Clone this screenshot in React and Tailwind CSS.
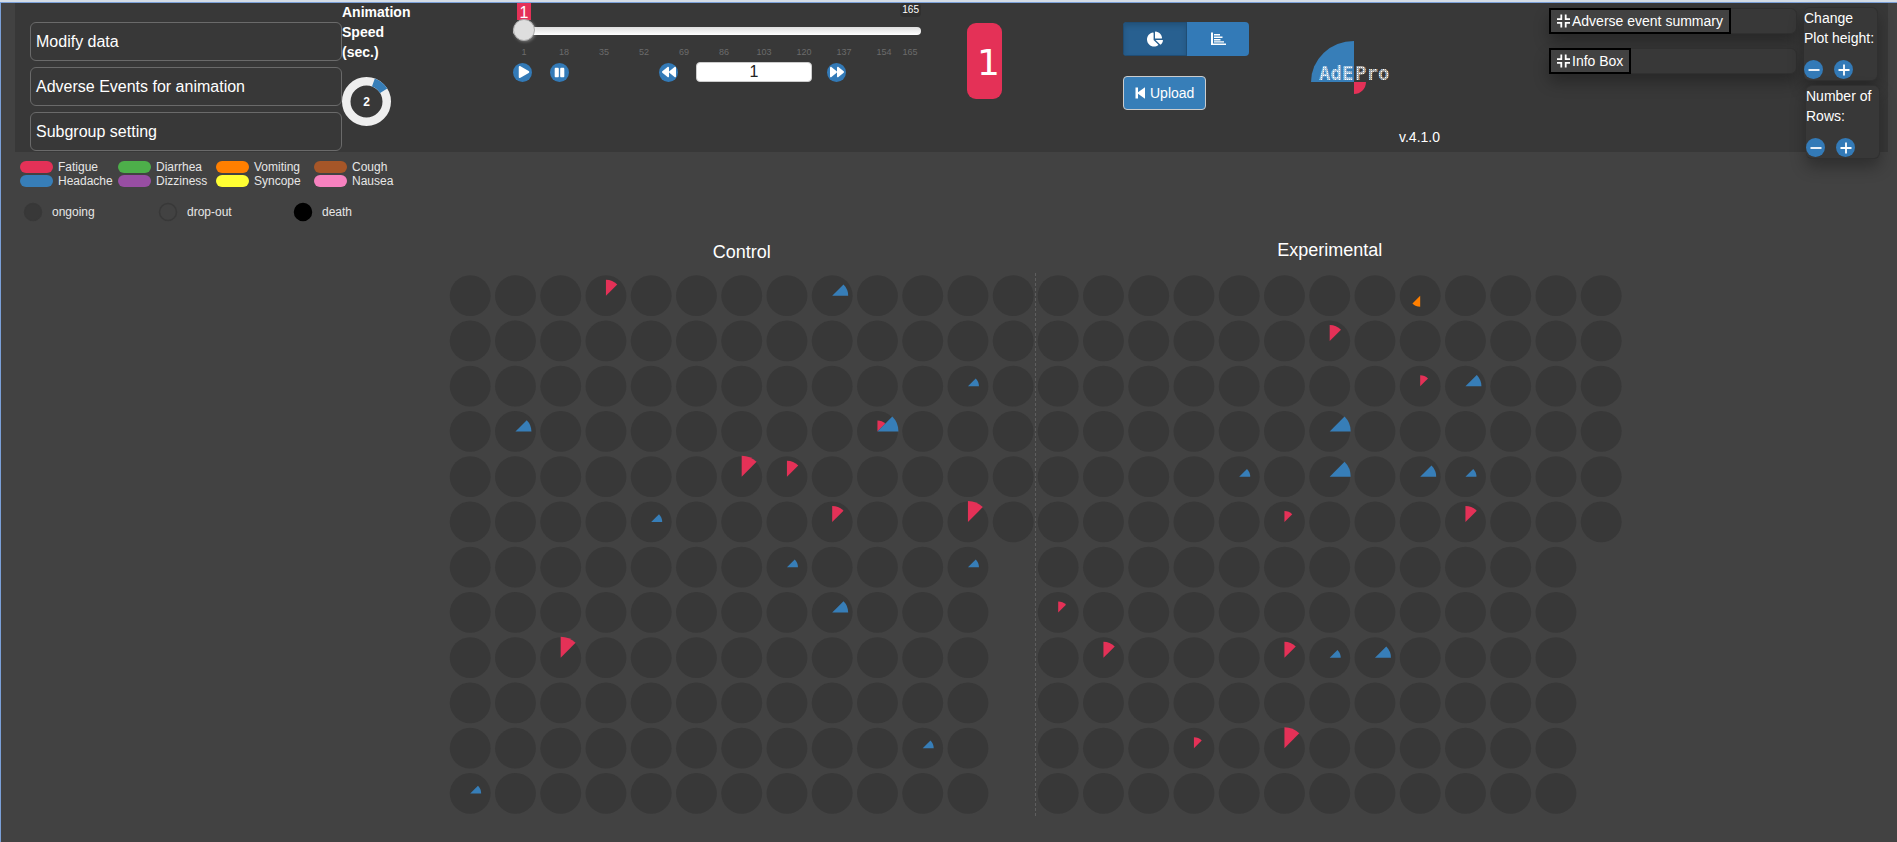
import { useState } from 'react';
import { FaBackward, FaChartPie, FaForward, FaPause, FaPlay, FaStepBackward } from 'react-icons/fa';

const MIN_DAY = 1;
const MAX_DAY = 165;
const TICKS = [1, 18, 35, 52, 69, 86, 103, 120, 137, 154, 165];

const PANELS = ['Modify data', 'Adverse Events for animation', 'Subgroup setting'];

const EVENTS = [
  { name: 'Fatigue', color: '#e43157' },
  { name: 'Headache', color: '#377eb8' },
  { name: 'Diarrhea', color: '#4daf4a' },
  { name: 'Dizziness', color: '#984ea3' },
  { name: 'Vomiting', color: '#ff7f00' },
  { name: 'Syncope', color: '#ffff33' },
  { name: 'Cough', color: '#a65628' },
  { name: 'Nausea', color: '#f781bf' },
];

const STATUSES = [
  { name: 'ongoing', fill: '#383838', stroke: '#383838' },
  { name: 'drop-out', fill: 'none', stroke: '#383838' },
  { name: 'death', fill: '#000000', stroke: '#000000' },
];

// [row, column, event index, severity grade]
const CONTROL = [
  [0, 3, 0, 2], [0, 8, 1, 2], [2, 11, 1, 1], [3, 1, 1, 2], [3, 9, 0, 1], [3, 9, 1, 3],
  [4, 6, 0, 3], [4, 7, 0, 2], [5, 4, 1, 1], [5, 8, 0, 2], [5, 11, 0, 3], [6, 7, 1, 1],
  [6, 11, 1, 1], [7, 8, 1, 2], [8, 2, 0, 3], [10, 10, 1, 1], [11, 0, 1, 1],
];

const EXPERIMENTAL = [
  [0, 8, 4, 1], [1, 6, 0, 2], [2, 8, 0, 1], [2, 9, 1, 2], [3, 6, 1, 3], [4, 4, 1, 1],
  [4, 6, 1, 3], [4, 8, 1, 2], [4, 9, 1, 1], [5, 5, 0, 1], [5, 9, 0, 2], [7, 0, 0, 1],
  [8, 1, 0, 2], [8, 5, 0, 2], [8, 6, 1, 1], [8, 7, 1, 2], [10, 3, 0, 1], [10, 5, 0, 3],
];

const PITCH = 45.25;
const GRADE_RADIUS = [0, 11, 16, 21];

function slicePath(cx, cy, r, index) {
  const a0 = (index * Math.PI) / 4;
  const a1 = a0 + Math.PI / 4;
  const p = (a) => `${cx + r * Math.sin(a)} ${cy - r * Math.cos(a)}`;
  return `M${cx} ${cy}L${p(a0)}A${r} ${r} 0 0 1 ${p(a1)}Z`;
}

function Arm({ title, titleY, x0, y0, slices }) {
  const patients = [];
  for (let row = 0; row < 12; row++) {
    const cols = row < 6 ? 13 : 12;
    for (let col = 0; col < cols; col++) patients.push([row, col]);
  }
  return (
    <g>
      <text
        x={x0 + 6 * PITCH}
        y={titleY}
        textAnchor="middle"
        fontSize="18"
        fill="#ffffff"
      >
        {title}
      </text>
      {patients.map(([row, col]) => (
        <circle
          key={`${row}-${col}`}
          cx={x0 + col * PITCH}
          cy={y0 + row * PITCH}
          r="20.4"
          fill="#383838"
        />
      ))}
      {slices.map(([row, col, event, grade]) => (
        <path
          key={`${row}-${col}-${event}`}
          d={slicePath(x0 + col * PITCH, y0 + row * PITCH, GRADE_RADIUS[grade], event)}
          fill={EVENTS[event].color}
        />
      ))}
    </g>
  );
}

function PiePlot() {
  return (
    <svg viewBox="0 0 1896 609" className="block h-auto w-full" role="img" aria-label="Adverse events">
      <Arm title="Control" titleY="26" x0={469.2} y0={63.7} slices={CONTROL} />
      <Arm title="Experimental" titleY="24" x0={1057.2} y0={63.7} slices={EXPERIMENTAL} />
      <line x1="1034.5" x2="1034.5" y1="41" y2="584" stroke="#5e5e5e" strokeDasharray="3 2" />
    </svg>
  );
}

function RoundButton({ label, onClick, children }) {
  return (
    <button
      type="button"
      aria-label={label}
      onClick={onClick}
      className="flex size-[19px] shrink-0 items-center justify-center rounded-full bg-[#337ab7] text-white"
    >
      {children}
    </button>
  );
}

function SignIcon({ plus }) {
  return (
    <svg viewBox="0 0 12 12" className="size-3" stroke="currentColor" strokeWidth="1.8">
      <path d={plus ? 'M0.5 6H11.5M6 0.5V11.5' : 'M0.5 6H11.5'} />
    </svg>
  );
}

function Stepper({ label, onChange }) {
  return (
    <div
      role="group"
      aria-label={label}
      className="w-[74px] rounded-md border border-l-0 border-[#303030] bg-[#383838] shadow-[0_8px_16px_rgba(0,0,0,0.3)]"
    >
      <p className="text-sm leading-5">{label}</p>
      <div className="mt-3 mb-px flex gap-[11px]">
        <RoundButton label={`${label} less`} onClick={() => onChange(-1)}>
          <SignIcon />
        </RoundButton>
        <RoundButton label={`${label} more`} onClick={() => onChange(1)}>
          <SignIcon plus />
        </RoundButton>
      </div>
    </div>
  );
}

function CompressIcon() {
  return (
    <svg viewBox="0 0 13 14" className="h-3.5 w-[13px]" fill="none" stroke="currentColor" strokeWidth="1.8">
      <path d="M4.3 0.5V5.2H0M8.7 0.5V5.2H13M4.3 13.5V8.8H0M8.7 13.5V8.8H13" />
    </svg>
  );
}

function InfoPanel({ title }) {
  return (
    <div className="flex h-[26px] rounded-md border border-[#303030] bg-[#383838] shadow-[0_8px_16px_rgba(0,0,0,0.3)]">
      <button
        type="button"
        className="-m-px flex items-center gap-0.5 border-2 border-black bg-[#424242] px-1.5 text-sm leading-5"
      >
        <CompressIcon />
        {title}
      </button>
    </div>
  );
}

function Knob({ value }) {
  return (
    <div className="relative flex size-[49px] items-center justify-center">
      <svg viewBox="0 0 49 49" className="absolute inset-0" fill="none" strokeWidth="8.5">
        <circle cx="24.5" cy="24.5" r="20.25" stroke="#eeeeee" />
        <path d="M31.4 5.5A20.25 20.25 0 0 1 41.7 13.8" stroke="#377eb8" />
      </svg>
      <output className="relative text-xs font-bold">{value}</output>
    </div>
  );
}

function Logo() {
  return (
    <svg viewBox="0 0 80 54" className="h-[54px] w-20" role="img" aria-label="AdEPro">
      <defs>
        <pattern id="dots" width="2" height="2" patternUnits="userSpaceOnUse">
          <rect width="2" height="2" fill="#ffffff" fillOpacity="0.55" />
          <rect width="1" height="1" fill="#ffffff" />
        </pattern>
      </defs>
      <path d="M43 0V41H0A43 41 0 0 1 43 0Z" fill="#377eb8" />
      <path d="M43 41H55A12 12 0 0 1 43 53Z" fill="#e43157" />
      <g fontSize="19" fontWeight="bold" fontFamily="DejaVu Sans Mono, monospace" fill="url(#dots)">
        <text x="8" y="39">AdE</text>
        <text x="44" y="39">Pro</text>
      </g>
    </svg>
  );
}

export default function App() {
  const [day, setDay] = useState(MIN_DAY);
  const [view, setView] = useState('pie');
  const move = (d) => setDay((v) => Math.min(MAX_DAY, Math.max(MIN_DAY, v + d)));

  return (
    <div className="min-h-screen border-t-2 border-[#d5dde6] bg-[#424242] font-['Liberation_Sans',Arial,sans-serif] text-white">
      <div className="min-h-[840px] border-t border-l border-[#7ba0d8]">
        <header className="mr-[9px] ml-[14px] grid grid-cols-[327fr_171fr_454fr_156fr_188fr_238fr_255fr_84fr] items-start bg-[#383838]">
          <nav className="flex flex-col gap-1.5 pt-[19px] pb-px pl-[15px]">
            {PANELS.map((p) => (
              <button
                key={p}
                type="button"
                className="h-[39px] rounded-md border border-[#6a6a6a] px-[5px] text-left text-base"
              >
                {p}
              </button>
            ))}
          </nav>

          <div>
            <div className="-mt-px">
              <p className="mb-[15px] w-[72px] text-sm leading-5 font-bold">Animation Speed (sec.)</p>
              <Knob value={2} />
            </div>
          </div>

          <div className="pr-[46px]">
            <div className="flex h-4 items-start justify-between">
              <span className="ml-1 flex h-[17px] w-3.5 justify-center bg-[#e43157] text-base leading-5">{day}</span>
              <span className="rounded-sm bg-[#303030] px-0.5 text-[10px] leading-[14px]">{MAX_DAY}</span>
            </div>
            <input
              type="range"
              aria-label="Day"
              min={MIN_DAY}
              max={MAX_DAY}
              value={day}
              onChange={(e) => setDay(Number(e.target.value))}
              className="relative block h-6 w-full appearance-none bg-transparent [&::-webkit-slider-runnable-track]:h-2 [&::-webkit-slider-runnable-track]:rounded-full [&::-webkit-slider-runnable-track]:bg-linear-to-b [&::-webkit-slider-runnable-track]:from-[#dedede] [&::-webkit-slider-runnable-track]:to-white [&::-webkit-slider-thumb]:-mt-2 [&::-webkit-slider-thumb]:size-[22px] [&::-webkit-slider-thumb]:appearance-none [&::-webkit-slider-thumb]:rounded-full [&::-webkit-slider-thumb]:border [&::-webkit-slider-thumb]:border-[#aaaaaa] [&::-webkit-slider-thumb]:bg-[#dedede] [&::-webkit-slider-thumb]:shadow-[1px_1px_3px_rgba(255,255,255,0.3)]"
            />
            <div className="mx-[11px] mt-[3px] grid grid-cols-[repeat(9,17fr)_11fr_0px] text-[9px] leading-3 text-[#6b6b6b]">
              {TICKS.map((t) => (
                <span key={t} className="flex w-0 justify-center">
                  {t}
                </span>
              ))}
            </div>
            <div className="mt-1 flex items-center">
              <RoundButton label="Play">
                <FaPlay className="ml-0.5 size-3" />
              </RoundButton>
              <span className="w-[18px]" />
              <RoundButton label="Pause">
                <FaPause className="size-[11px]" />
              </RoundButton>
              <div className="ml-auto flex items-center pr-[75px]">
                <RoundButton label="Back" onClick={() => move(-1)}>
                  <FaBackward className="size-3.5" />
                </RoundButton>
                <input
                  type="text"
                  aria-label="Current day"
                  value={day}
                  onChange={(e) => setDay(Number(e.target.value) || MIN_DAY)}
                  className="mr-[15px] ml-[18px] h-5 w-[116px] rounded-sm border border-[#cccccc] bg-white text-center text-base leading-4 text-[#222222]"
                />
                <RoundButton label="Forward" onClick={() => move(1)}>
                  <FaForward className="size-3.5" />
                </RoundButton>
              </div>
            </div>
          </div>

          <div className="pt-5">
            <output className="flex h-[76px] w-[35px] items-center justify-end rounded-[9px] bg-[#e43157] pt-1 pr-0.5 font-['DejaVu_Sans',sans-serif] text-4xl">
              {day}
            </output>
          </div>

          <div className="flex flex-col items-start gap-5 pt-[19px]">
            <div className="flex h-[34px] w-[126px] overflow-hidden rounded-sm">
              <button
                type="button"
                aria-label="Pie view"
                aria-pressed={view === 'pie'}
                onClick={() => setView('pie')}
                className="flex flex-1 items-center justify-center border border-[#204d74] bg-[#286090] shadow-[inset_0_3px_5px_rgba(0,0,0,0.15)]"
              >
                <FaChartPie className="size-4" />
              </button>
              <button
                type="button"
                aria-label="Bar view"
                aria-pressed={view === 'bar'}
                onClick={() => setView('bar')}
                className="flex flex-1 items-center justify-center bg-[#337ab7]"
              >
                <svg viewBox="0 0 15 14" className="h-3.5 w-[15px]" fill="currentColor">
                  <path d="M0 0.5H2V11.5H15V13H0Z M3 2H9V3.5H3Z M3 4.5H11.5V6H3Z M3 7H9.5V8.5H3Z M3 9.3H13V10.5H3Z" />
                </svg>
              </button>
            </div>
            <button
              type="button"
              className="flex h-[34px] items-center gap-1 rounded-sm border border-[#cccccc] bg-[#377eb8] px-[11px] text-sm"
            >
              <svg viewBox="0 0 11 12" className="h-3 w-[11px]" fill="currentColor">
                <path d="M0.5 0.5H3V5.2L10 0.3V11.7L3 6.8V11.5H0.5Z" />
              </svg>
              Upload
            </button>
          </div>

          <div className="flex flex-col pt-[38px]">
            <Logo />
            <span className="mt-8 ml-[88px] text-sm leading-5">v.4.1.0</span>
          </div>

          <div className="flex flex-col gap-3.5 pt-[5px] pr-[7px]">
            <InfoPanel title="Adverse event summary" />
            <InfoPanel title="Info Box" />
          </div>

          <div className="-mb-2 flex flex-col gap-1 pt-1">
            <Stepper label="Change Plot height:" onChange={() => {}} />
            <div className="ml-0.5">
              <Stepper label="Number of Rows:" onChange={() => {}} />
            </div>
          </div>
        </header>

        <ul className="ml-[19px] grid w-max grid-flow-col grid-cols-[repeat(4,98px)] grid-rows-2 pt-2 text-xs leading-[14px] text-[#e6e6e6]">
          {EVENTS.map((e) => (
            <li key={e.name} className="flex items-center gap-[5px]">
              <span className="h-3 w-[33px] rounded-full" style={{ backgroundColor: e.color }} />
              {e.name}
            </li>
          ))}
        </ul>

        <ul className="mt-3.5 ml-[22px] grid w-max grid-cols-[repeat(3,135px)] text-xs text-[#e6e6e6]">
          {STATUSES.map((s) => (
            <li key={s.name} className="flex items-center gap-[9px]">
              <svg viewBox="0 0 20 20" className="size-5">
                <circle cx="10" cy="10" r="8.5" fill={s.fill} stroke={s.stroke} strokeWidth="1.5" />
              </svg>
              {s.name}
            </li>
          ))}
        </ul>

        <main className="mt-2.5">
          <PiePlot />
        </main>
      </div>
    </div>
  );
}
